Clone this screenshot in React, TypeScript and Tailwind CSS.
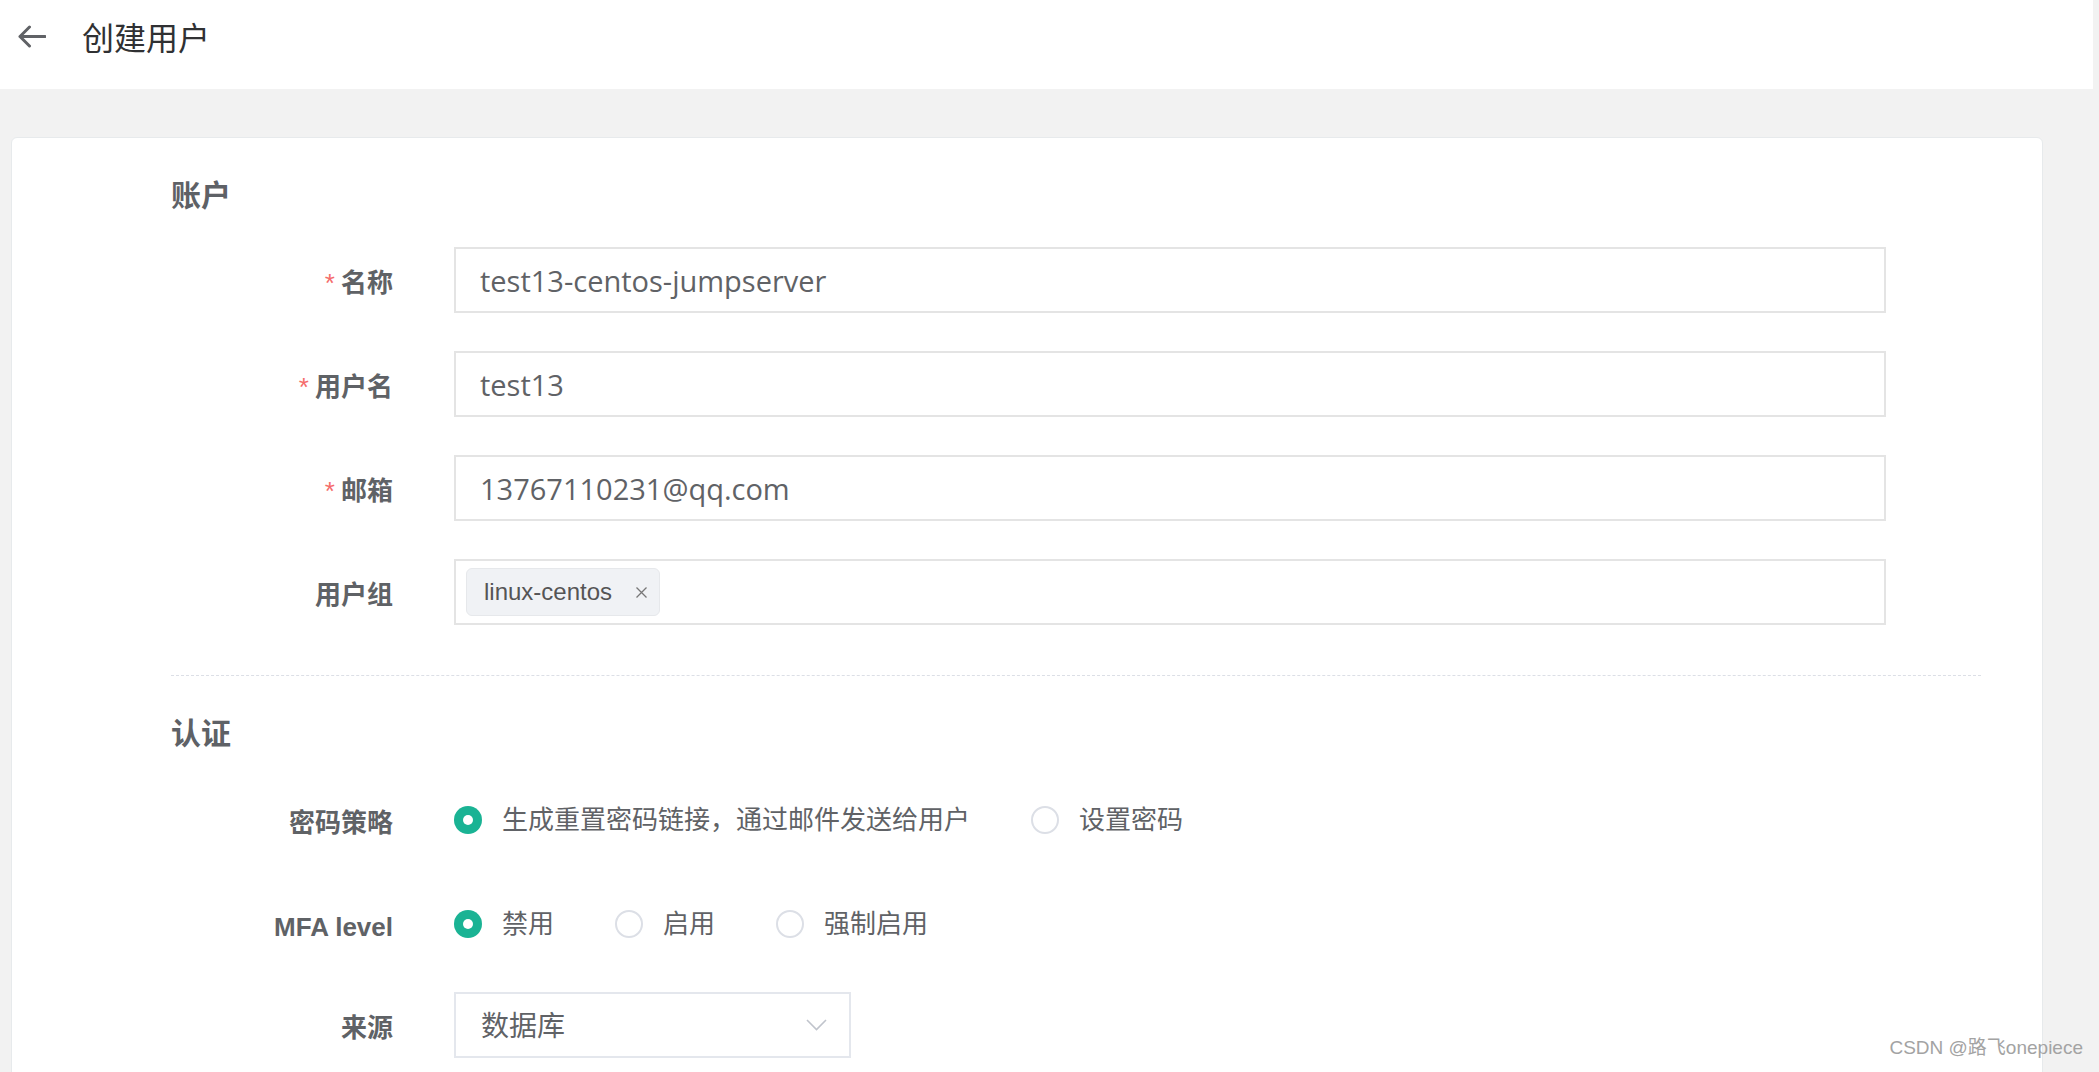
const sans = "font-['Liberation_Sans','Noto_Sans_CJK_SC',sans-serif]";

function Label({ text, required }: { text: string; required?: boolean }): JSX.Element {
  return (
    <div className={`w-[222px] shrink-0 mr-[61px] pt-[6px] text-right text-[26px] font-bold text-[#5f6266] ${sans}`}>
      {required && <span className="text-[#f56c6c] font-normal mr-[6px] text-[26px]">*</span>}
      {text}
    </div>
  );
}

function TextInput({ value }: { value: string }): JSX.Element {
  return (
    <div className="w-[1432px] h-[66px] border-2 border-[#e4e4e4] bg-white flex items-center pl-[24px] pt-[2px] text-[29px] text-[#606266] font-['Open_Sans','Noto_Sans_CJK_SC',sans-serif]">
      {value}
    </div>
  );
}

function Radio({ label, checked }: { label: string; checked?: boolean }): JSX.Element {
  return (
    <div className="flex items-center mr-[61px]">
      {checked ? (
        <span className="w-[28px] h-[28px] rounded-full bg-[#1ab394] flex items-center justify-center">
          <span className="w-[10px] h-[10px] rounded-full bg-white" />
        </span>
      ) : (
        <span className="w-[28px] h-[28px] rounded-full border-2 border-[#dcdfe6] bg-white" />
      )}
      <span className={`ml-[20px] text-[26px] text-[#606266] ${sans}`}>{label}</span>
    </div>
  );
}

function SectionTitle({ text }: { text: string }): JSX.Element {
  return (
    <div className={`h-[40px] leading-[40px] text-[30px] font-bold text-[#5e6166] ${sans}`}>{text}</div>
  );
}

export default function App(): JSX.Element {
  return (
    <div className={`relative w-full h-[1072px] overflow-hidden bg-[#f2f2f2] ${sans}`}>
      <div className="w-[2093px] h-[89px] bg-white flex items-start">
        <svg className="ml-[17px] mt-[24px]" width="29" height="25" viewBox="0 0 29 25" fill="none">
          <path d="M28 12.5H3M12.5 3L3 12.5L12.5 22" stroke="#606266" strokeWidth="3" strokeLinecap="round" strokeLinejoin="round" />
        </svg>
        <div className="ml-[36px] mt-[19px] h-[40px] leading-[40px] text-[32px] text-[#303133]">创建用户</div>
      </div>

      <div className="ml-[11px] mt-[48px] w-[2032px] bg-white border border-[#e7eaec] rounded-[6px] pl-[159px] pr-[61px] pt-[38px] pb-[200px]">
        <SectionTitle text="账户" />
        <div className="mt-[31px] flex flex-col gap-[38px]">
          <div className="flex items-center">
            <Label text="名称" required />
            <TextInput value="test13-centos-jumpserver" />
          </div>
          <div className="flex items-center">
            <Label text="用户名" required />
            <TextInput value="test13" />
          </div>
          <div className="flex items-center">
            <Label text="邮箱" required />
            <TextInput value="13767110231@qq.com" />
          </div>
          <div className="flex items-center">
            <Label text="用户组" />
            <div className="w-[1432px] h-[66px] border-2 border-[#e4e4e4] bg-white flex items-center pl-[10px]">
              <div className="h-[48px] w-[194px] flex items-center pl-[17px] bg-[#f0f2f5] border border-[#e6e8eb] rounded-[6px] text-[24px] text-[#555] font-['Liberation_Sans',sans-serif]">
                linux-centos
                <svg className="ml-[23px]" width="13" height="13" viewBox="0 0 13 13">
                  <path d="M1.5 1.5L11.5 11.5M11.5 1.5L1.5 11.5" stroke="#777" strokeWidth="1.3" />
                </svg>
              </div>
            </div>
          </div>
        </div>

        <div className="mt-[50px] border-t border-dashed border-[#dcdfe6]" />

        <div className="mt-[38px]">
          <SectionTitle text="认证" />
        </div>
        <div className="mt-[33px] flex items-center h-[66px]">
          <Label text="密码策略" />
          <Radio label="生成重置密码链接，通过邮件发送给用户" checked />
          <Radio label="设置密码" />
        </div>
        <div className="mt-[38px] flex items-center h-[66px]">
          <Label text="MFA level" />
          <Radio label="禁用" checked />
          <Radio label="启用" />
          <Radio label="强制启用" />
        </div>
        <div className="mt-[35px] flex items-center h-[66px]">
          <Label text="来源" />
          <div className="w-[397px] h-[66px] border-2 border-[#e4e7ed] bg-white flex items-center justify-between pl-[25px] pr-[22px]">
            <span className="text-[28px] text-[#606266] mt-[4px]">数据库</span>
            <svg width="21" height="12" viewBox="0 0 21 12" fill="none">
              <path d="M1 1L10.5 10.5L20 1" stroke="#c0c4cc" strokeWidth="1.6" />
            </svg>
          </div>
        </div>
      </div>

      <div className="absolute right-[16px] bottom-[10px] text-[19px] text-[#a3a3a3] font-['Liberation_Sans','Noto_Sans_CJK_SC',sans-serif]">
        CSDN @路飞onepiece
      </div>
    </div>
  );
}
